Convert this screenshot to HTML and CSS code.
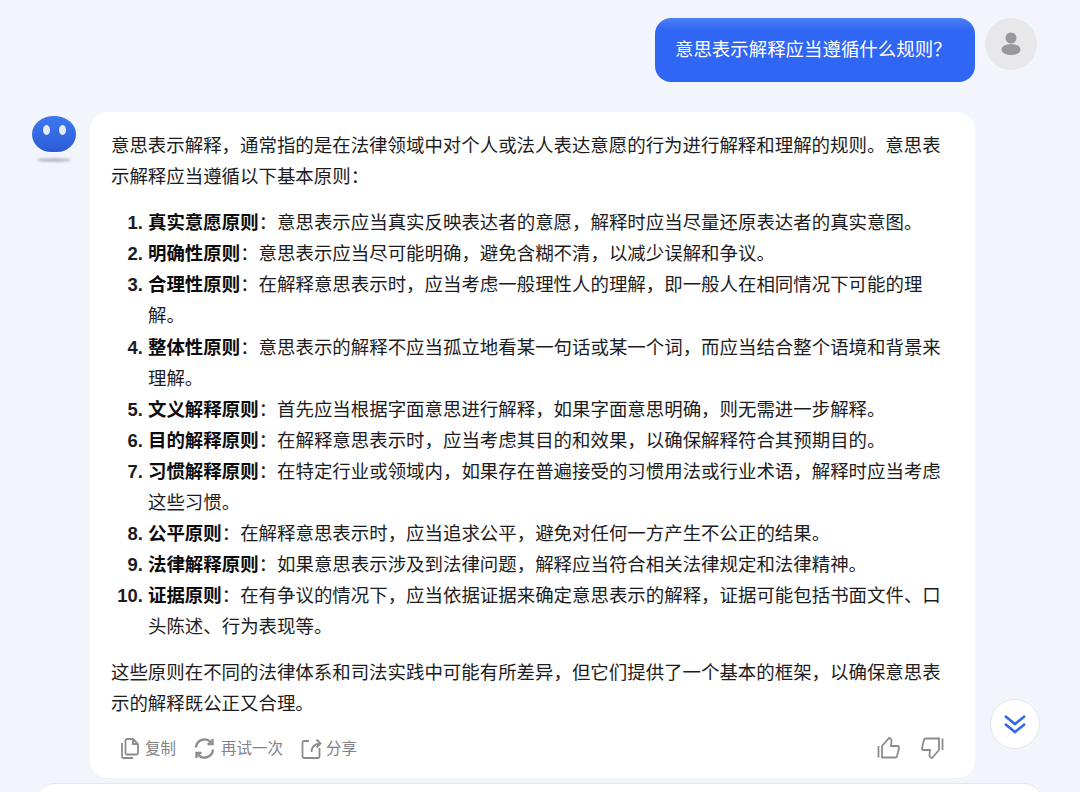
FILE: index.html
```html
<!DOCTYPE html>
<html lang="zh-CN">
<head>
    <meta charset="UTF-8">
    <meta name="viewport" content="width=device-width, initial-scale=1.0">
    <title>意思表示解释</title>
    <link rel="stylesheet" href="styles.css">
</head>
<body>
    <div class="page">
        <div class="user-row">
            <div class="user-bubble">意思表示解释应当遵循什么规则？</div>
            <div class="user-avatar">
                <svg width="24" height="26" viewBox="0 0 24 26"><circle cx="12" cy="7" r="5.5" fill="#98989c"/><ellipse cx="12" cy="18.5" rx="9.5" ry="5.5" fill="#98989c"/></svg>
            </div>
        </div>

        <div class="bot-row">
            <div class="bot-avatar">
                <div class="bot-head"><span class="eye"></span><span class="eye"></span></div>
                <div class="bot-shadow"></div>
            </div>
            <div class="bot-bubble">
                <p>意思表示解释，通常指的是在法律领域中对个人或法人表达意愿的行为进行解释和理解的规则。意思表示解释应当遵循以下基本原则：</p>
                <ol>
                    <li><strong>真实意愿原则</strong>：意思表示应当真实反映表达者的意愿，解释时应当尽量还原表达者的真实意图。</li>
                    <li><strong>明确性原则</strong>：意思表示应当尽可能明确，避免含糊不清，以减少误解和争议。</li>
                    <li><strong>合理性原则</strong>：在解释意思表示时，应当考虑一般理性人的理解，即一般人在相同情况下可能的理解。</li>
                    <li><strong>整体性原则</strong>：意思表示的解释不应当孤立地看某一句话或某一个词，而应当结合整个语境和背景来理解。</li>
                    <li><strong>文义解释原则</strong>：首先应当根据字面意思进行解释，如果字面意思明确，则无需进一步解释。</li>
                    <li><strong>目的解释原则</strong>：在解释意思表示时，应当考虑其目的和效果，以确保解释符合其预期目的。</li>
                    <li><strong>习惯解释原则</strong>：在特定行业或领域内，如果存在普遍接受的习惯用法或行业术语，解释时应当考虑这些习惯。</li>
                    <li><strong>公平原则</strong>：在解释意思表示时，应当追求公平，避免对任何一方产生不公正的结果。</li>
                    <li><strong>法律解释原则</strong>：如果意思表示涉及到法律问题，解释应当符合相关法律规定和法律精神。</li>
                    <li><strong>证据原则</strong>：在有争议的情况下，应当依据证据来确定意思表示的解释，证据可能包括书面文件、口头陈述、行为表现等。</li>
                </ol>
                <p>这些原则在不同的法律体系和司法实践中可能有所差异，但它们提供了一个基本的框架，以确保意思表示的解释既公正又合理。</p>
                <div class="actions">
                    <div class="actions-left">
                        <span class="action">
                            <svg width="18" height="21" viewBox="0 0 18 21" class="icon"><path d="M6 1h6l5 5v9a1.500 1.500 0 0 1-1.500 1.500H6A1.500 1.500 0 0 1 4.500 15V2.500A1.500 1.500 0 0 1 6 1zM12 1v5h5M1 5v13.500A1.500 1.500 0 0 0 2.500 20H12"/></svg>
                            复制
                        </span>
                        <span class="action">
                            <svg width="21" height="21" viewBox="0 0 21 21" class="icon icon-thick"><path d="M2 9.500a8.500 8.500 0 0 1 15-5M19 11.500a8.500 8.500 0 0 1-15 5"/><path d="M18.500 1v5h-5M2.500 20v-5h5"/></svg>
                            再试一次
                        </span>
                        <span class="action action-share">
                            <svg width="22" height="21" viewBox="0 0 22 21" class="icon"><path d="M8 3H3A1.500 1.500 0 0 0 1.500 4.500v14A1.500 1.500 0 0 0 3 20h14a1.500 1.500 0 0 0 1.500-1.500V10"/><path d="M10.500 14c0-5.500 3-8 8.500-8.500M15.500 1.500l4 4-4 4"/></svg>
                            分享
                        </span>
                    </div>
                    <div class="actions-right">
                        <svg width="23" height="22" viewBox="0 0 23 22" class="icon"><path d="M1.500 9v11.500M5 9v11.500h13.500c.8 0 1.300-.5 1.500-1.200l2-8.300c.2-1-.5-2-1.500-2H14l.5-5c.1-1.500-1-3-2.500-3L5 9z"/></svg>
                        <svg width="23" height="22" viewBox="0 0 23 22" class="icon"><path d="M21.500 13V1.500M18 13V1.500H4.500c-.8 0-1.300.5-1.500 1.200L1 11c-.2 1 .5 2 1.500 2H9l-.5 5c-.1 1.500 1 3 2.500 3l7-8z"/></svg>
                    </div>
                </div>
            </div>
        </div>

        <div class="input-box"></div>

        <div class="scroll-btn">
            <svg width="24" height="20" viewBox="0 0 24 20"><path d="M2 2l10 8 10-8M2 10l10 8 10-8" fill="none" stroke="#3468e8" stroke-width="2.600"/></svg>
        </div>
    </div>
</body>
</html>
```

FILE: styles.css
```css
html, body {
    margin: 0;
    height: 100%;
}
body {
    font-family: "Liberation Sans", "Noto Sans CJK SC", sans-serif;
    background-color: #f3f5fd;
    color: #1c1c1e;
    font-size: 18.45px;
    line-height: 31.1px;
}
.page {
    position: relative;
    height: 792px;
    overflow: hidden;
}
.user-row {
    display: flex;
    justify-content: flex-end;
    align-items: flex-start;
    gap: 10px;
    padding: 18px 43px 0 0;
}
.user-bubble {
    width: 320px;
    box-sizing: border-box;
    height: 64px;
    padding: 0 20px;
    display: flex;
    align-items: center;
    color: #fff;
    background: linear-gradient(#4f7ff5 0, #2f66f4 12px);
    border-radius: 16px;
}
.user-avatar {
    width: 52px;
    height: 52px;
    border-radius: 50%;
    background-color: #e8e8ea;
    display: flex;
    align-items: center;
    justify-content: center;
}
.bot-row {
    display: flex;
    align-items: flex-start;
    gap: 14px;
    padding: 30px 0 0 32px;
}
.bot-avatar {
    width: 44px;
    padding-top: 4px;
}
.bot-head {
    height: 36px;
    border-radius: 22px 22px 19px 19px / 18px 18px 18px 18px;
    background: linear-gradient(#3d78f0, #2c5cd6);
    display: flex;
    justify-content: center;
    gap: 9px;
    padding-top: 9px;
    box-sizing: border-box;
}
.eye {
    width: 7px;
    height: 10px;
    border-radius: 50%;
    background-color: #e6ecfb;
}
.bot-shadow {
    width: 34px;
    height: 4px;
    margin: 6px auto 0;
    border-radius: 50%;
    background-color: #bcbec6;
    filter: blur(1px);
}
.bot-bubble {
    width: 885px;
    height: 666px;
    box-sizing: border-box;
    padding: 18px 21px 0;
    background-color: #fff;
    border-radius: 18px;
}
p {
    margin: 0;
    width: 835px;
}
ol {
    margin: 15px 0 14px;
    padding-left: 37px;
    width: 800px;
}
li::marker {
    font-weight: bold;
}
strong {
    font-weight: bold;
    color: #0c0c0e;
}
.actions {
    display: flex;
    justify-content: space-between;
    align-items: center;
    margin-top: 14px;
    padding: 0 10px;
    color: #808287;
    font-size: 15.5px;
}
.actions-left {
    display: flex;
    align-items: center;
    gap: 18px;
}
.action {
    display: flex;
    align-items: center;
    gap: 6px;
}
.action-share {
    gap: 3px;
}
.actions-right {
    display: flex;
    align-items: center;
    gap: 21px;
}
.icon {
    fill: none;
    stroke: #8a8c90;
    stroke-width: 1.8;
}
.icon-thick {
    stroke-width: 2.4;
}
.input-box {
    position: absolute;
    left: 33px;
    top: 783px;
    width: 1012px;
    height: 60px;
    box-sizing: border-box;
    background-color: #fff;
    border: 1px solid #e6e7ec;
    border-radius: 22px;
}
.scroll-btn {
    position: absolute;
    left: 990px;
    top: 699px;
    width: 50px;
    height: 50px;
    box-sizing: border-box;
    border: 1px solid #e4e6ee;
    border-radius: 50%;
    background-color: #fff;
    display: flex;
    align-items: center;
    justify-content: center;
}
```
